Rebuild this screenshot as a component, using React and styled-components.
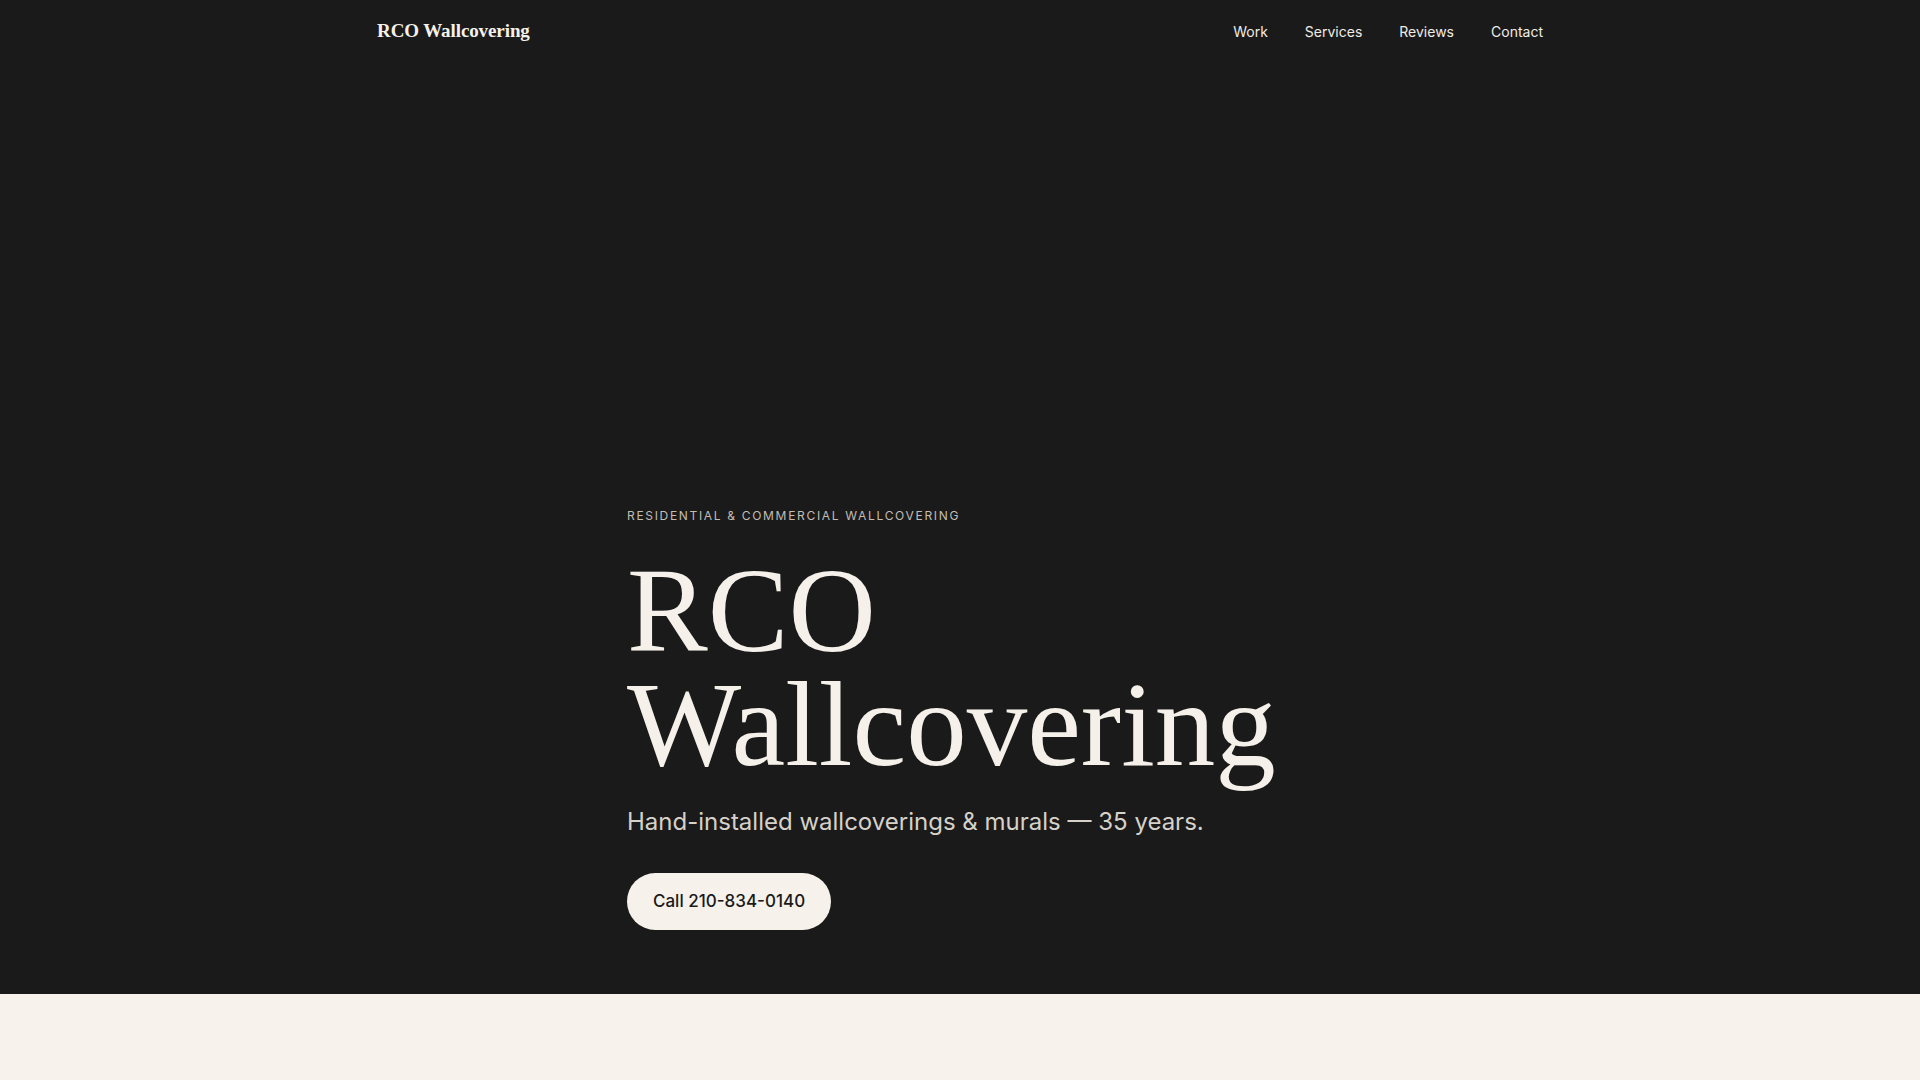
import React from "react";
import styled, { createGlobalStyle } from "styled-components";

const GlobalStyle = createGlobalStyle`
  * { box-sizing: border-box; }
  html, body { margin: 0; padding: 0; }
  body {
    background: #f7f2ec;
    font-family: Inter, "Noto Sans", sans-serif;
    -webkit-font-smoothing: antialiased;
  }
`;

const Dark = styled.section`
  background: #1a1a1a;
  min-height: 92vh;
  display: flex;
  flex-direction: column;
`;

const Header = styled.header`
  width: 1166px;
  margin: 0 auto;
  height: 62px;
  display: flex;
  align-items: center;
  justify-content: space-between;
`;

const Logo = styled.a`
  font-family: "Liberation Serif", "DejaVu Serif", serif;
  font-weight: 700;
  font-size: 19px;
  color: #f5f1ea;
  text-decoration: none;
  letter-spacing: -0.005em;
`;

const Nav = styled.nav`
  display: flex;
  gap: 37px;
`;

const NavLink = styled.a`
  font-size: 14px;
  color: #f0ece6;
  text-decoration: none;
`;

const Hero = styled.div`
  flex: 1;
  display: flex;
  flex-direction: column;
  justify-content: flex-end;
  width: 666px;
  margin: 0 auto;
  padding-bottom: 64px;
`;

const Eyebrow = styled.p`
  margin: 0 0 30px;
  font-size: 12px;
  letter-spacing: 0.14em;
  text-transform: uppercase;
  color: #c2bdb5;
`;

const Title = styled.h1`
  margin: 0;
  font-family: "Liberation Serif", "DejaVu Serif", serif;
  font-weight: 400;
  font-size: 121px;
  line-height: 114px;
  letter-spacing: 0;
  color: #f5f1ea;
`;

const Sub = styled.p`
  margin: 26px 0 0;
  font-size: 24px;
  color: #d6d1c9;
`;

const Button = styled.a`
  align-self: flex-start;
  margin-top: 37px;
  height: 57px;
  padding: 0 26px;
  display: inline-flex;
  align-items: center;
  border-radius: 999px;
  background: #f6f1eb;
  color: #1a1a1a;
  font-size: 17px;
  font-weight: 500;
  text-decoration: none;
`;

const Cream = styled.section`
  background: #f7f2ec;
  height: 400px;
`;

export default function App() {
  return (
    <>
      <GlobalStyle />
      <Dark>
        <Header>
          <Logo href="#">RCO Wallcovering</Logo>
          <Nav>
            <NavLink href="#work">Work</NavLink>
            <NavLink href="#services">Services</NavLink>
            <NavLink href="#reviews">Reviews</NavLink>
            <NavLink href="#contact">Contact</NavLink>
          </Nav>
        </Header>
        <Hero>
          <Eyebrow>Residential &amp; Commercial Wallcovering</Eyebrow>
          <Title>
            RCO
            <br />
            Wallcovering
          </Title>
          <Sub>Hand-installed wallcoverings &amp; murals — 35 years.</Sub>
          <Button href="tel:2108340140">Call 210-834-0140</Button>
        </Hero>
      </Dark>
      <Cream />
    </>
  );
}
